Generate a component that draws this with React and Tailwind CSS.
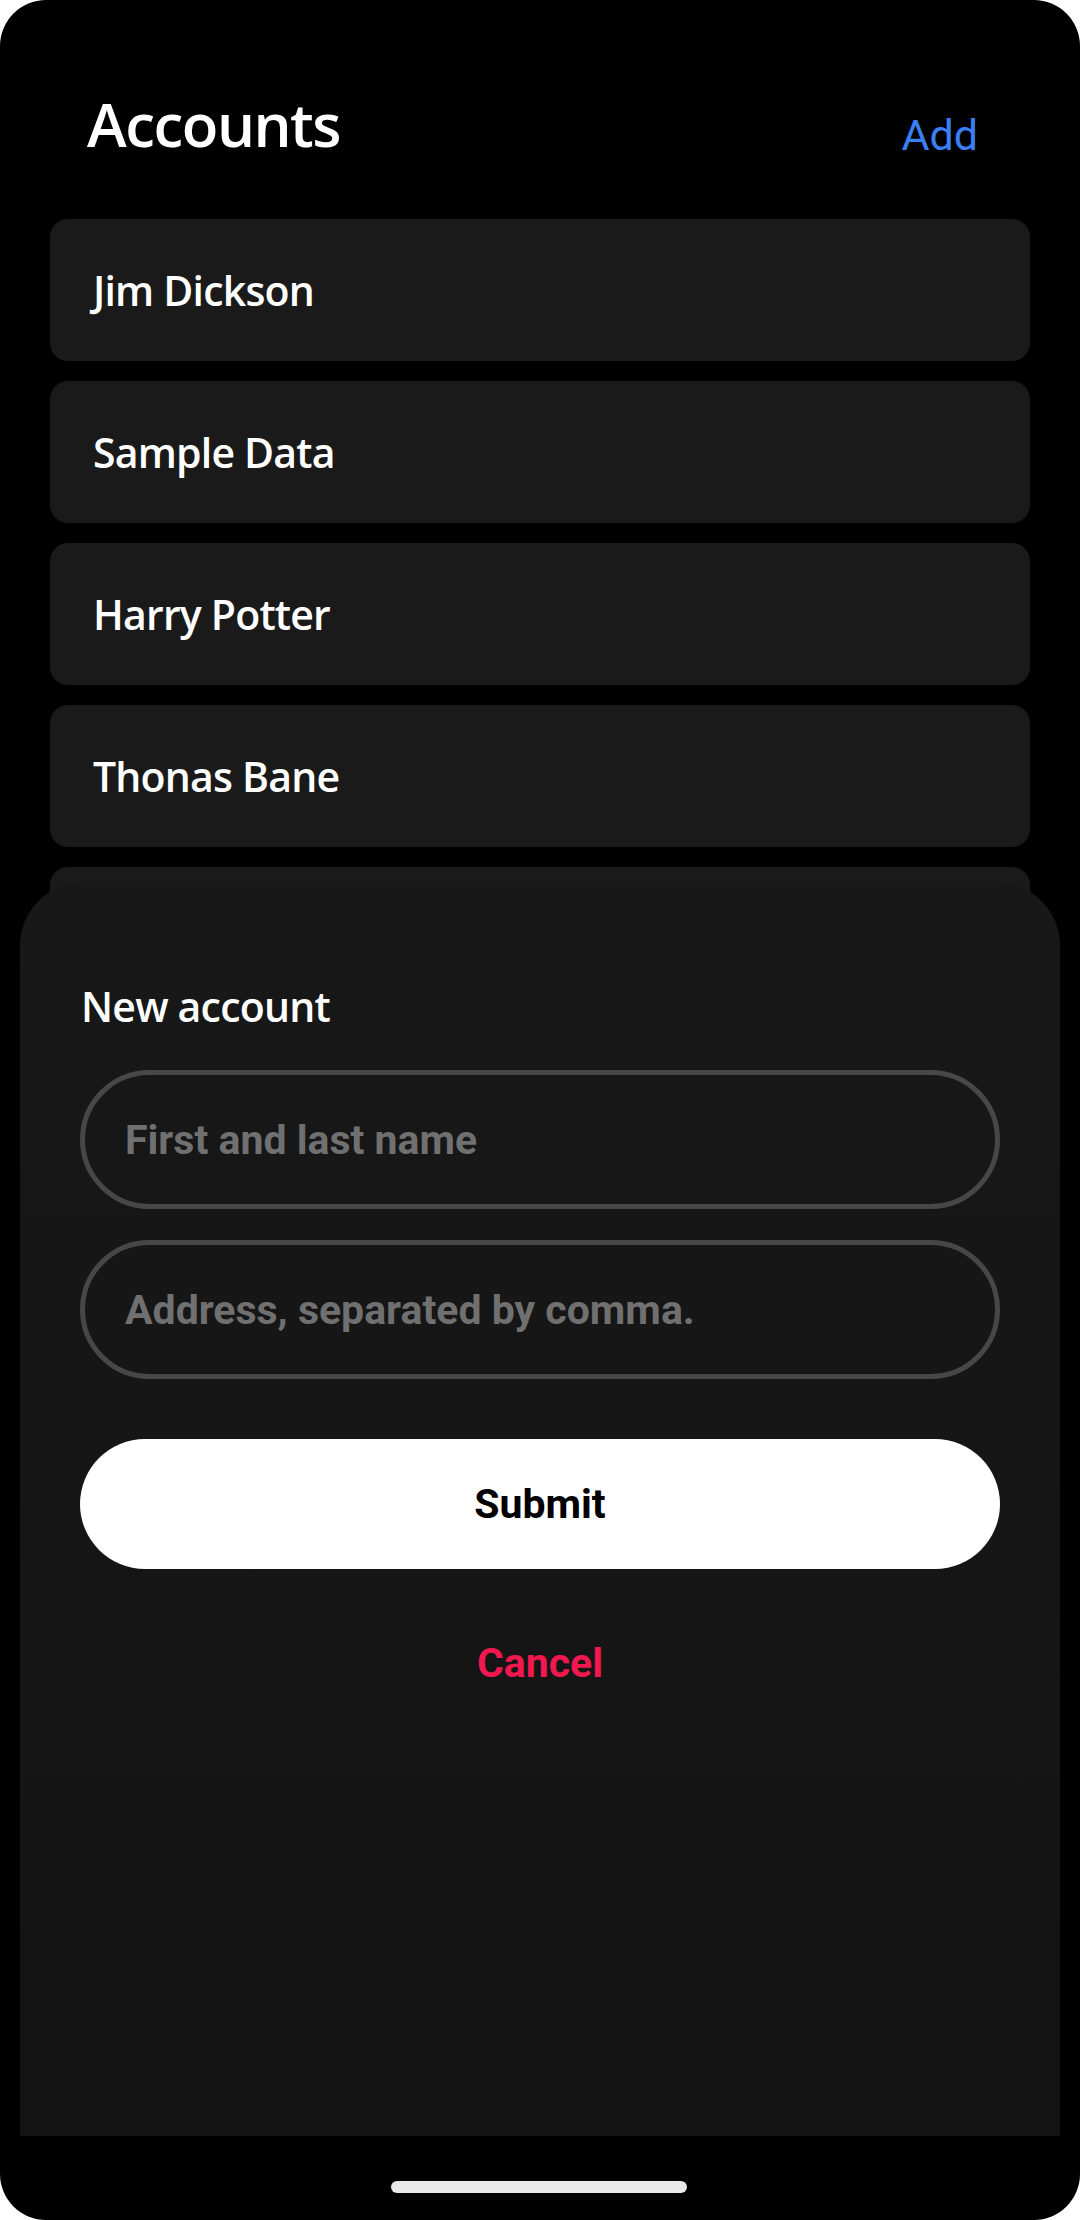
import React from "react";

const names = ["Jim Dickson", "Sample Data", "Harry Potter", "Thonas Bane", ""];

export default function App() {
  return (
    <div className="w-[1080px] h-[2220px] bg-white">
      <div className="relative w-[1080px] h-[2220px] rounded-[46px] bg-black overflow-hidden" style={{ fontFamily: '"Open Sans", "Noto Sans", sans-serif' }}>
        <div className="h-[219px] box-border pt-[94px] pl-[87px] pr-[102px] flex items-start justify-between">
          <div className="text-white text-[60px] leading-[60px] font-semibold tracking-[-1.5px]">Accounts</div>
          <div className="mt-[20px] text-[#3a7ff6] text-[43px] leading-[43px]" style={{ fontFamily: 'Roboto, "Liberation Sans", sans-serif' }}>Add</div>
        </div>
        <div className="flex flex-col gap-[20px] px-[50px]">
          {names.map((n, i) => (
            <div key={i} className="h-[142px] rounded-[18px] bg-[#1a1a1a] flex items-center pl-[43px]">
              {n && <span className="text-white text-[41px] leading-[54px] font-semibold tracking-[-0.8px]">{n}</span>}
            </div>
          ))}
        </div>

        <div className="absolute left-[20px] right-[20px] top-[882px] bottom-[84px] rounded-t-[64px] bg-gradient-to-b from-[#181818] to-[#131313] flex flex-col px-[60px] pt-[97px]">
          <div className="text-white text-[41px] leading-[54px] font-semibold tracking-[-0.8px] pl-[1px]">New account</div>
          <div className="mt-[37px] h-[139px] rounded-full border-[5px] border-[#474747] flex items-center pl-[40px]" style={{ fontFamily: 'Roboto, "Liberation Sans", sans-serif' }}>
            <span className="text-[#707070] text-[41px] font-bold leading-[48px]">First and last name</span>
          </div>
          <div className="mt-[31px] h-[139px] rounded-full border-[5px] border-[#474747] flex items-center pl-[40px]" style={{ fontFamily: 'Roboto, "Liberation Sans", sans-serif' }}>
            <span className="text-[#707070] text-[41px] font-bold leading-[48px]">Address, separated by comma.</span>
          </div>
          <div className="mt-[60px] h-[130px] rounded-full bg-white flex items-center justify-center" style={{ fontFamily: 'Roboto, "Liberation Sans", sans-serif' }}>
            <span className="text-black text-[41px] font-bold leading-[48px]">Submit</span>
          </div>
          <div className="mt-[70px] text-center text-[#f0184f] text-[41px] font-bold leading-[48px]" style={{ fontFamily: 'Roboto, "Liberation Sans", sans-serif' }}>Cancel</div>
        </div>

        <div className="absolute bottom-[27px] left-[391px] w-[296px] h-[12px] rounded-full bg-[#e9e9e9]" />
      </div>
    </div>
  );
}
